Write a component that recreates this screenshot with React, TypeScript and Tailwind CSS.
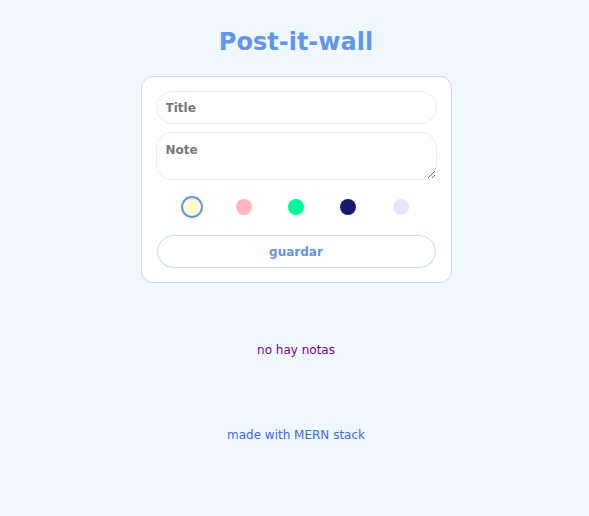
import { useState } from "react";

const COLORS = ["#fffacd", "#ffb6c1", "#00fa9a", "#191970", "#e6e6fa"];

export default function App() {
  const [selected, setSelected] = useState(0);

  return (
    <div
      className="min-h-screen bg-[#f0f8ff] flex flex-col items-center pl-[3px]"
      style={{ fontFamily: '"DejaVu Sans", sans-serif' }}
    >
      <h1 className="mt-[27px] text-[24px] leading-[30px] font-bold text-[#6495ed]">
        Post-it-wall
      </h1>

      <form className="mt-[19px] w-[311px] rounded-[12px] border border-[#cdd9e6] bg-white px-[14px] pt-[14px] pb-[14px] flex flex-col">
        <input
          placeholder="Title"
          className="h-[33px] w-full rounded-full border border-[#ececec] px-[9px] text-[12px] font-bold outline-none placeholder:text-[#777]"
        />
        <textarea
          placeholder="Note"
          className="mt-[8px] h-[48px] w-full rounded-[16px] border border-[#ececec] px-[9px] pt-[8px] text-[12px] font-bold outline-none placeholder:text-[#777]"
        />

        <div className="mt-[16px] flex justify-between px-[25px] items-center h-[22px]">
          {COLORS.map((c, i) => (
            <button
              type="button"
              key={c}
              onClick={() => setSelected(i)}
              className={
                i === selected
                  ? "h-[22px] w-[22px] rounded-full border-2 border-[#6495ed]"
                  : "h-[16px] w-[16px] mx-[3px] rounded-full"
              }
              style={{ backgroundColor: c }}
            />
          ))}
        </div>

        <button
          type="button"
          className="mt-[17px] mx-[1px] h-[33px] rounded-full border border-[#c3d5f5] bg-white text-[12px] font-bold text-[#6495ed]"
        >
          guardar
        </button>
      </form>

      <p className="mt-[59px] text-[12px] leading-[16px] text-[#800080]">no hay notas</p>

      <footer className="mt-[69px] text-[12px] leading-[16px] text-[#4169e1]">
        made with MERN stack
      </footer>
    </div>
  );
}
